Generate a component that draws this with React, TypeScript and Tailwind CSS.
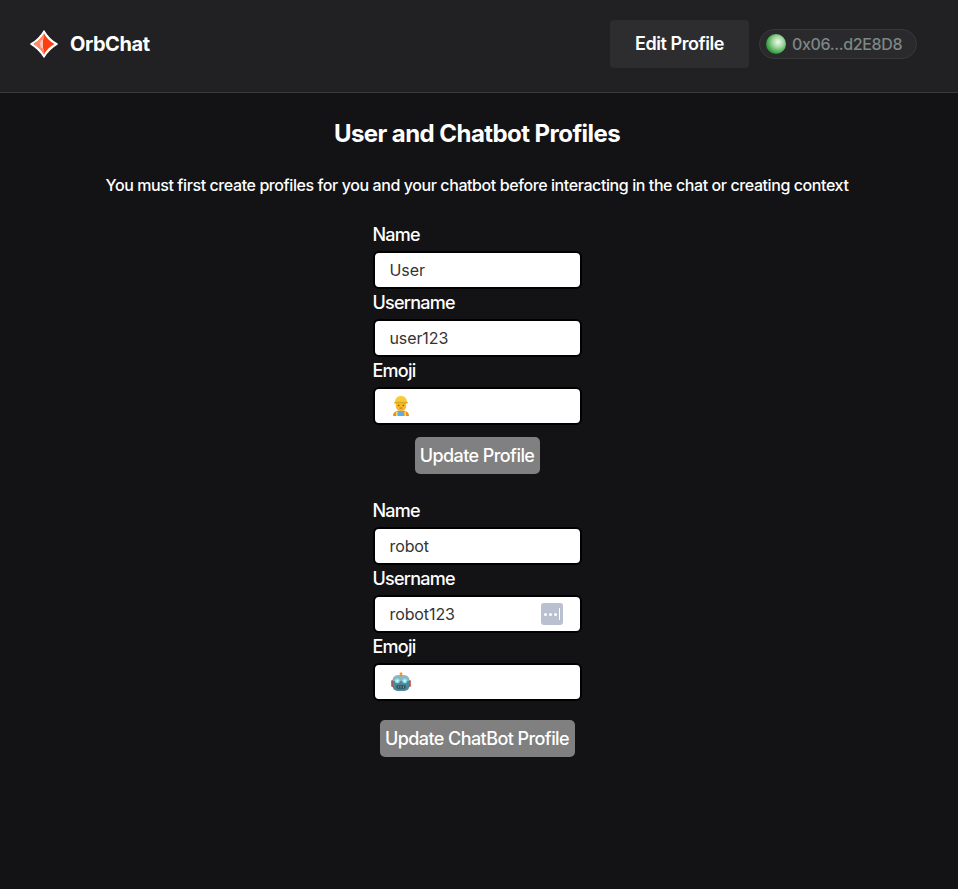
import React from "react";

const font = { fontFamily: "Inter, 'Liberation Sans', sans-serif" };

function Logo() {
  return (
    <svg width="28" height="28" viewBox="0 0 28 28">
      <path d="M14 1 C16.5 5.5 22 11 27 14 C22 17 16.5 22.5 14 27 C11.5 22.5 6 17 1 14 C6 11 11.5 5.5 14 1 Z" fill="#ffffff" stroke="#ffffff" strokeWidth="1.5" strokeLinejoin="round" />
      <path d="M14 3.5 C16 7.5 20.5 11.8 24.5 14 C20.5 16.2 16 20.5 14 24.5 C12 20.5 7.5 16.2 3.5 14 C7.5 11.8 12 7.5 14 3.5 Z" fill="#fc3f12" />
      <path d="M14 3.5 C12 7.5 7.5 11.8 3.5 14 C7.5 16.2 12 20.5 14 24.5 Z" fill="#ff8a68" />
      <ellipse cx="13" cy="14" rx="3" ry="4.8" fill="#fc3f12" />
      <path d="M13 9.2 A3 4.8 0 0 0 13 18.8 Z" fill="#ffc4b3" />
    </svg>
  );
}

function WorkerEmoji() {
  return (
    <svg width="20" height="22" viewBox="0 0 20 22">
      <path d="M2 21 C2 17 5 15.5 10 15.5 C15 15.5 18 17 18 21 Z" fill="#f08f1e" />
      <rect x="7" y="16.5" width="6" height="4.5" fill="#62a9e6" />
      <rect x="5" y="16.5" width="1.6" height="4.5" fill="#f4dd52" />
      <rect x="13.4" y="16.5" width="1.6" height="4.5" fill="#f4dd52" />
      <path d="M4.8 8 L15.2 8 L15.2 11 C15.2 14 12.8 16 10 16 C7.2 16 4.8 14 4.8 11 Z" fill="#f7b92c" />
      <path d="M4 7.5 C4 3 6.8 1 10 1 C13.2 1 16 3 16 7.5 Z" fill="#f8cb3a" />
      <rect x="3.2" y="6.8" width="13.6" height="1.8" rx="0.9" fill="#e4a820" />
      <rect x="7" y="9.8" width="1.4" height="1.4" rx="0.7" fill="#6b4310" />
      <rect x="11.6" y="9.8" width="1.4" height="1.4" rx="0.7" fill="#6b4310" />
      <rect x="8.6" y="12.6" width="2.8" height="0.9" fill="#b95f18" />
    </svg>
  );
}

function RobotEmoji() {
  return (
    <svg width="20" height="20" viewBox="0 0 20 20">
      <rect x="9.2" y="2" width="1.6" height="2" fill="#8a9aa0" />
      <circle cx="10" cy="1.8" r="1.5" fill="#f2a02c" />
      <rect x="0.2" y="8" width="3" height="7" rx="1.2" fill="#c9473c" />
      <rect x="16.8" y="8" width="3" height="7" rx="1.2" fill="#c9473c" />
      <rect x="1.6" y="3.5" width="16.8" height="15.5" rx="5" fill="#4d8798" />
      <path d="M1.6 9 C1.6 5.5 4 3.5 6.6 3.5 L13.4 3.5 C16 3.5 18.4 5.5 18.4 9 Z" fill="#8fb3bf" />
      <circle cx="6.3" cy="8.8" r="2.5" fill="#7ee3ee" />
      <circle cx="13.7" cy="8.8" r="2.5" fill="#7ee3ee" />
      <circle cx="6.3" cy="8.8" r="1.1" fill="#d8f7fa" />
      <circle cx="13.7" cy="8.8" r="1.1" fill="#d8f7fa" />
      <path d="M8.8 12 L11.2 12 L10 10.3 Z" fill="#d9534a" />
      <rect x="5.5" y="13.2" width="9" height="3.6" rx="1.2" fill="#33505c" />
      <rect x="7" y="14.5" width="1" height="1" fill="#a9c4cc" />
      <rect x="9.5" y="14.5" width="1" height="1" fill="#a9c4cc" />
      <rect x="12" y="14.5" width="1" height="1" fill="#a9c4cc" />
    </svg>
  );
}

function PasswordKey() {
  return (
    <span className="flex h-[22px] w-[22px] items-center justify-center gap-[2px] rounded-[3px] bg-[#b9c0cf]">
      <span className="h-[3px] w-[3px] rounded-full bg-white" />
      <span className="h-[3px] w-[3px] rounded-full bg-white" />
      <span className="h-[3px] w-[3px] rounded-full bg-white" />
      <span className="h-[12px] w-[1px] bg-white" />
    </span>
  );
}

function Field({ label, value, emoji, keyIcon }: { label: string; value?: string; emoji?: React.ReactNode; keyIcon?: boolean }) {
  return (
    <div className="flex flex-col">
      <label className="h-6 pt-[1px] text-lg leading-6 font-[450] tracking-[-0.75px] text-white">{label}</label>
      <div className="mt-[5px] mb-[1px] flex h-[38px] items-center justify-between rounded-[6px] border-2 border-black bg-white pr-[17px] pl-[15px] text-base tracking-[-0.1px] text-[#333333]">
        {emoji ? <span className="ml-[1px]">{emoji}</span> : <span>{value}</span>}
        {keyIcon ? <PasswordKey /> : null}
      </div>
    </div>
  );
}

export default function App() {
  return (
    <div className="min-h-[889px] bg-[#131316]" style={font}>
      <header className="flex h-[93px] items-center justify-between border-b border-[#3a3a3c] bg-[#212123] pr-[41px] pb-[4px] pl-[30px]">
        <div className="flex items-center gap-[12px]">
          <Logo />
          <span className="text-xl font-bold tracking-[-0.45px] text-white">OrbChat</span>
        </div>
        <div className="flex items-center gap-[10px]">
          <button className="h-[48px] w-[139px] rounded-[4px] bg-[#2d2d30] text-lg font-semibold tracking-[-0.45px] text-white">Edit Profile</button>
          <div className="flex h-[30px] w-[158px] items-center gap-[6px] rounded-full border border-[#38383b] bg-[#2a2a2d] pl-[6px]">
            <span className="h-5 w-5 rounded-full bg-[radial-gradient(circle_at_60%_40%,#f2f8f2_0%,#a0d8a0_32%,#2f9a3a_70%,#1c6e28_100%)]" />
            <span className="text-base font-medium tracking-[-0.35px] text-[#7d8785]">0x06...d2E8D8</span>
          </div>
        </div>
      </header>
      <main className="flex w-[954px] flex-col items-center">
        <h1 className="mt-[26px] text-2xl leading-[30px] font-bold tracking-[-0.56px] text-white">User and Chatbot Profiles</h1>
        <p className="mt-[24px] text-base leading-6 font-[450] tracking-[-0.41px] text-white">
          You must first create profiles for you and your chatbot before interacting in the chat or creating context
        </p>
        <div className="mt-[25px] flex w-[209px] flex-col">
          <Field label="Name" value="User" />
          <Field label="Username" value="user123" />
          <Field label="Emoji" emoji={<WorkerEmoji />} />
          <button className="mt-[11px] h-[37px] w-[125px] self-center rounded-[5px] bg-[#808080] text-lg font-[450] tracking-[-0.57px] whitespace-nowrap text-white">Update Profile</button>
          <div className="mt-6">
            <Field label="Name" value="robot" />
            <Field label="Username" value="robot123" keyIcon />
            <Field label="Emoji" emoji={<RobotEmoji />} />
          </div>
          <button className="mt-[18px] h-[37px] w-[195px] self-center rounded-[5px] bg-[#808080] text-lg font-[450] tracking-[-0.57px] whitespace-nowrap text-white">Update ChatBot Profile</button>
        </div>
      </main>
    </div>
  );
}
